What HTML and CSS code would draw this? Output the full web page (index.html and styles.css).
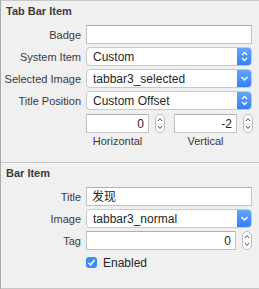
FILE: index.html
```html
<!DOCTYPE html>
<html lang="en">
<head>
    <meta charset="UTF-8">
    <title>Tab Bar Item Inspector</title>
    <link rel="stylesheet" href="styles.css">
</head>
<body>
    <div class="inspector">
        <!-- Tab Bar Item -->
        <div class="section">
            <h2>Tab Bar Item</h2>
            <div class="row">
                <label>Badge</label>
                <div class="field"></div>
            </div>
            <div class="row">
                <label>System Item</label>
                <div class="popup">
                    <span>Custom</span>
                    <span class="arrow">
                        <svg width="9" height="11" viewBox="0 0 9 11"><path d="M2 4 L4.5 1.5 L7 4 M2 7 L4.5 9.5 L7 7" fill="none" stroke="#fff" stroke-width="1.3"/></svg>
                    </span>
                </div>
            </div>
            <div class="row">
                <label>Selected Image</label>
                <div class="popup">
                    <span>tabbar3_selected</span>
                    <span class="arrow">
                        <svg width="9" height="11" viewBox="0 0 9 11"><path d="M1.5 4 L4.5 7 L7.5 4" fill="none" stroke="#fff" stroke-width="1.4"/></svg>
                    </span>
                </div>
            </div>
            <div class="row">
                <label>Title Position</label>
                <div class="popup">
                    <span>Custom Offset</span>
                    <span class="arrow">
                        <svg width="9" height="11" viewBox="0 0 9 11"><path d="M2 4 L4.5 1.5 L7 4 M2 7 L4.5 9.5 L7 7" fill="none" stroke="#fff" stroke-width="1.3"/></svg>
                    </span>
                </div>
            </div>
            <div class="offsets">
                <div class="offset">
                    <div class="offset-input">
                        <div class="field num">0</div>
                        <svg class="stepper" width="10" height="19" viewBox="0 0 10 19"><rect x="0.5" y="0.5" width="9" height="18" rx="4.5" fill="#fff" stroke="#bdbdbd"/><path d="M3 7 L5 4.5 L7 7 M3 12 L5 14.5 L7 12" fill="none" stroke="#555" stroke-width="1"/></svg>
                    </div>
                    <div class="caption">Horizontal</div>
                </div>
                <div class="offset">
                    <div class="offset-input">
                        <div class="field num">-2</div>
                        <svg class="stepper" width="10" height="19" viewBox="0 0 10 19"><rect x="0.5" y="0.5" width="9" height="18" rx="4.5" fill="#fff" stroke="#bdbdbd"/><path d="M3 7 L5 4.5 L7 7 M3 12 L5 14.5 L7 12" fill="none" stroke="#555" stroke-width="1"/></svg>
                    </div>
                    <div class="caption">Vertical</div>
                </div>
            </div>
        </div>

        <!-- Bar Item -->
        <div class="section">
            <h2>Bar Item</h2>
            <div class="row">
                <label>Title</label>
                <div class="field">发现</div>
            </div>
            <div class="row">
                <label>Image</label>
                <div class="popup">
                    <span>tabbar3_normal</span>
                    <span class="arrow">
                        <svg width="9" height="11" viewBox="0 0 9 11"><path d="M1.5 4 L4.5 7 L7.5 4" fill="none" stroke="#fff" stroke-width="1.4"/></svg>
                    </span>
                </div>
            </div>
            <div class="row">
                <label>Tag</label>
                <div class="tag-input">
                    <div class="field num">0</div>
                    <svg class="stepper" width="10" height="19" viewBox="0 0 10 19"><rect x="0.5" y="0.5" width="9" height="18" rx="4.5" fill="#fff" stroke="#bdbdbd"/><path d="M3 7 L5 4.5 L7 7 M3 12 L5 14.5 L7 12" fill="none" stroke="#555" stroke-width="1"/></svg>
                </div>
            </div>
            <div class="row check-row">
                <label></label>
                <div class="check">
                    <span class="box">
                        <svg width="11" height="11" viewBox="0 0 11 11"><path d="M2.5 5.8 L4.6 8 L8.5 3" fill="none" stroke="#fff" stroke-width="1.6"/></svg>
                    </span>
                    <span>Enabled</span>
                </div>
            </div>
        </div>
    </div>
</body>
</html>
```

FILE: styles.css
```css
body {
    margin: 0;
    background: #ececec;
    font-family: "Liberation Sans", Arial, "Noto Sans CJK SC", sans-serif;
    font-size: 11px;
    color: #262626;
}
.inspector {
    width: 259px;
    height: 289px;
    box-sizing: border-box;
    border-top: 1px solid #c6c6c6;
    border-left: 1px solid #a9a9a9;
    background: #f0f0f0;
}
.section {
    border-bottom: 1px solid #c6c6c6;
    padding: 0 7px 0 0;
}
.section h2 {
    margin: 0;
    padding: 4px 0 0 5px;
    height: 20px;
    font-size: 11px;
    font-weight: bold;
    color: #3c3c3c;
}
.row {
    display: flex;
    align-items: center;
    height: 19px;
    margin-bottom: 3px;
}
.row label {
    width: 80px;
    padding-right: 5px;
    text-align: right;
    color: #3a3a3a;
}
.field {
    flex: 1;
    height: 19px;
    box-sizing: border-box;
    background: #fff;
    border: 1px solid #c2c2c2;
    border-top-color: #b0b0b0;
    padding: 2px 5px 0;
    line-height: 14px;
    font-size: 12px;
}
.field.num {
    text-align: right;
    padding-right: 4px;
}
.popup {
    flex: 1;
    display: flex;
    align-items: center;
    justify-content: space-between;
    height: 19px;
    box-sizing: border-box;
    background: #fff;
    border: 1px solid #c8c8c8;
    border-radius: 4px;
    padding-left: 6px;
    font-size: 12px;
    overflow: hidden;
}
.popup .arrow {
    display: flex;
    align-items: center;
    justify-content: center;
    width: 15px;
    height: 19px;
    margin-right: -1px;
    background: linear-gradient(#66a9fa, #2f7df6);
    border-radius: 0 4px 4px 0;
}
.offsets {
    display: flex;
    margin: 4px 0 0 85px;
    gap: 9px;
    height: 48px;
}
.offset {
    display: flex;
    flex-direction: column;
    width: 79px;
}
.offset-input, .tag-input {
    display: flex;
    align-items: center;
    gap: 6px;
}
.offset-input .field {
    width: 63px;
    flex: none;
}
.tag-input {
    flex: 1;
}
.caption {
    text-align: center;
    padding-right: 16px;
    margin-top: 2px;
    font-size: 11px;
    color: #3a3a3a;
}
.check-row {
    margin-top: 1px;
    margin-bottom: 16px;
}
.check {
    display: flex;
    align-items: center;
    gap: 6px;
    font-size: 12px;
}
.check .box {
    display: flex;
    width: 11px;
    height: 11px;
    border-radius: 3px;
    background: #3b8cf6;
}
```
